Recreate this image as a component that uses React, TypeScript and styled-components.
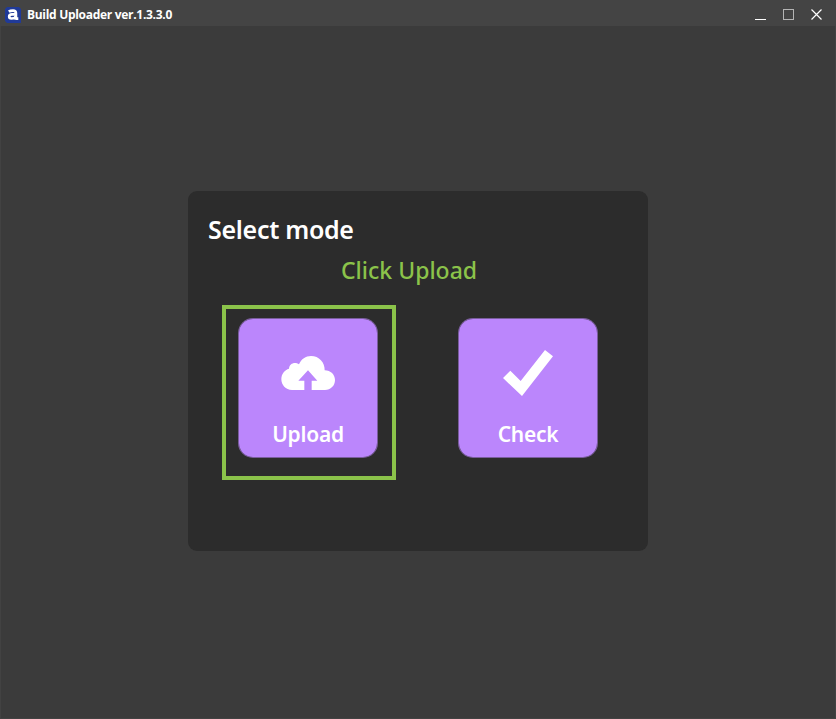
import React from "react";
import styled, { createGlobalStyle } from "styled-components";

const GlobalStyle = createGlobalStyle`
  * { box-sizing: border-box; }
  html, body { margin: 0; padding: 0; background: #3b3b3b; }
  body { font-family: "Noto Sans", "Open Sans", sans-serif; color: #fff; overflow: hidden; }
`;

const Window = styled.div`
  display: flex;
  flex-direction: column;
  width: 836px;
  height: 719px;
  background: #3b3b3b;
  border: 1px solid #424242;
  border-top: 0;
`;

const TitleBar = styled.header`
  display: flex;
  align-items: center;
  flex: 0 0 26px;
  margin: 0 -1px;
  padding: 3px 11px 0 5px;
  background: #444;
`;

const AppIcon = styled.svg`
  display: block;
  width: 16px;
  height: 16px;
  margin-right: 6px;
`;

const Caption = styled.span`
  flex: 1;
  font: 700 12px/16px "Open Sans", sans-serif;
  letter-spacing: -0.3px;
`;

const WindowButtons = styled.div`
  display: flex;
  gap: 12px;
`;

const WindowButton = styled.button`
  display: block;
  width: 16px;
  height: 16px;
  padding: 0;
  border: 0;
  background: none;
  svg { display: block; }
`;

const Content = styled.main`
  display: flex;
  justify-content: center;
  align-items: flex-start;
  flex: 1;
  padding-top: 165px;
`;

const Panel = styled.section`
  display: flex;
  flex-direction: column;
  width: 460px;
  height: 360px;
  padding: 20px 50px 0 20px;
  border-radius: 9px;
  background: #2c2c2c;
`;

const Heading = styled.h1`
  margin: 0;
  font: 600 25px/36px "Noto Sans", sans-serif;
  letter-spacing: -0.3px;
`;

const Hint = styled.p`
  margin: 5px 0 0 133px;
  color: #8bc34a;
  font: 500 23px/36px "Noto Sans", sans-serif;
`;

const Modes = styled.div`
  display: flex;
  gap: 80px;
  margin: 30px 0 0 30px;
`;

const ModeSlot = styled.div`
  position: relative;
`;

const ModeButton = styled.button`
  display: flex;
  flex-direction: column;
  align-items: center;
  width: 140px;
  height: 140px;
  padding: 0;
  border: 1px solid rgba(187, 134, 252, 0.55);
  border-radius: 15px;
  background: #bb86fc;
  background-clip: padding-box;
  color: #fff;
`;

const IconArea = styled.span`
  display: flex;
  align-items: center;
  justify-content: center;
  flex: 0 0 100px;
  svg { display: block; margin-top: 8px; }
`;

const ModeLabel = styled.span`
  font: 600 21px/30px "Noto Sans", sans-serif;
  letter-spacing: -0.25px;
`;

const Highlight = styled.div`
  position: absolute;
  top: -13px;
  left: -16px;
  width: 174px;
  height: 175px;
  border: 4px solid #8bc34a;
  pointer-events: none;
`;

const CloudUploadIcon = () => (
  <svg width="54" height="34" viewBox="0 0 162 102">
    <path
      fill="#fff"
      d="M33 102C14 102 1 87 1 70C1 53 11 42 24 38C25 22 42 16 54 25C61 9 74 0 90 0C114 0 132 19 131 43C149 43 162 56 162 72C162 89 149 102 132 102H92V74H109L81 43L52 74H70V102Z"
    />
  </svg>
);

const CheckIcon = () => (
  <svg width="50" height="46" viewBox="0 0 150 138">
    <path fill="#fff" d="M0 84L22 62L53 93L126 0L150 19L57 138Z" />
  </svg>
);

export default function App() {
  return (
    <>
      <GlobalStyle />
      <Window>
        <TitleBar>
          <AppIcon viewBox="0 0 16 16">
            <path fill="#203a98" d="M2 0H14L16 2V16H2L0 14V2Z" />
            <path
              fill="none"
              stroke="#fff"
              strokeWidth="2.7"
              d="M3.8 4.7C5 3.8 6.4 3.6 8 3.6C10.2 3.6 10.9 4.5 10.9 6.2V12.8M10.8 7.4H7C4.9 7.4 4.2 8.3 4.2 9.6C4.2 11 5.1 11.5 6.5 11.5C8.6 11.5 10.3 10.8 10.8 9.4M10.8 11.7H13.3"
            />
          </AppIcon>
          <Caption>Build Uploader ver.1.3.3.0</Caption>
          <WindowButtons>
            <WindowButton aria-label="Minimize">
              <svg width="16" height="16"><path d="M2 12.5H13" stroke="#fff" /></svg>
            </WindowButton>
            <WindowButton aria-label="Maximize">
              <svg width="16" height="16"><rect x="2.5" y="2.5" width="10" height="10" fill="none" stroke="#b4b4b4" /></svg>
            </WindowButton>
            <WindowButton aria-label="Close">
              <svg width="16" height="16"><path d="M2.5 2.5L12.5 12.5M12.5 2.5L2.5 12.5" stroke="#fff" strokeWidth="1.2" /></svg>
            </WindowButton>
          </WindowButtons>
        </TitleBar>
        <Content>
          <Panel>
            <Heading>Select mode</Heading>
            <Hint>Click Upload</Hint>
            <Modes>
              <ModeSlot>
                <ModeButton>
                  <IconArea><CloudUploadIcon /></IconArea>
                  <ModeLabel>Upload</ModeLabel>
                </ModeButton>
                <Highlight />
              </ModeSlot>
              <ModeSlot>
                <ModeButton>
                  <IconArea><CheckIcon /></IconArea>
                  <ModeLabel>Check</ModeLabel>
                </ModeButton>
              </ModeSlot>
            </Modes>
          </Panel>
        </Content>
      </Window>
    </>
  );
}
